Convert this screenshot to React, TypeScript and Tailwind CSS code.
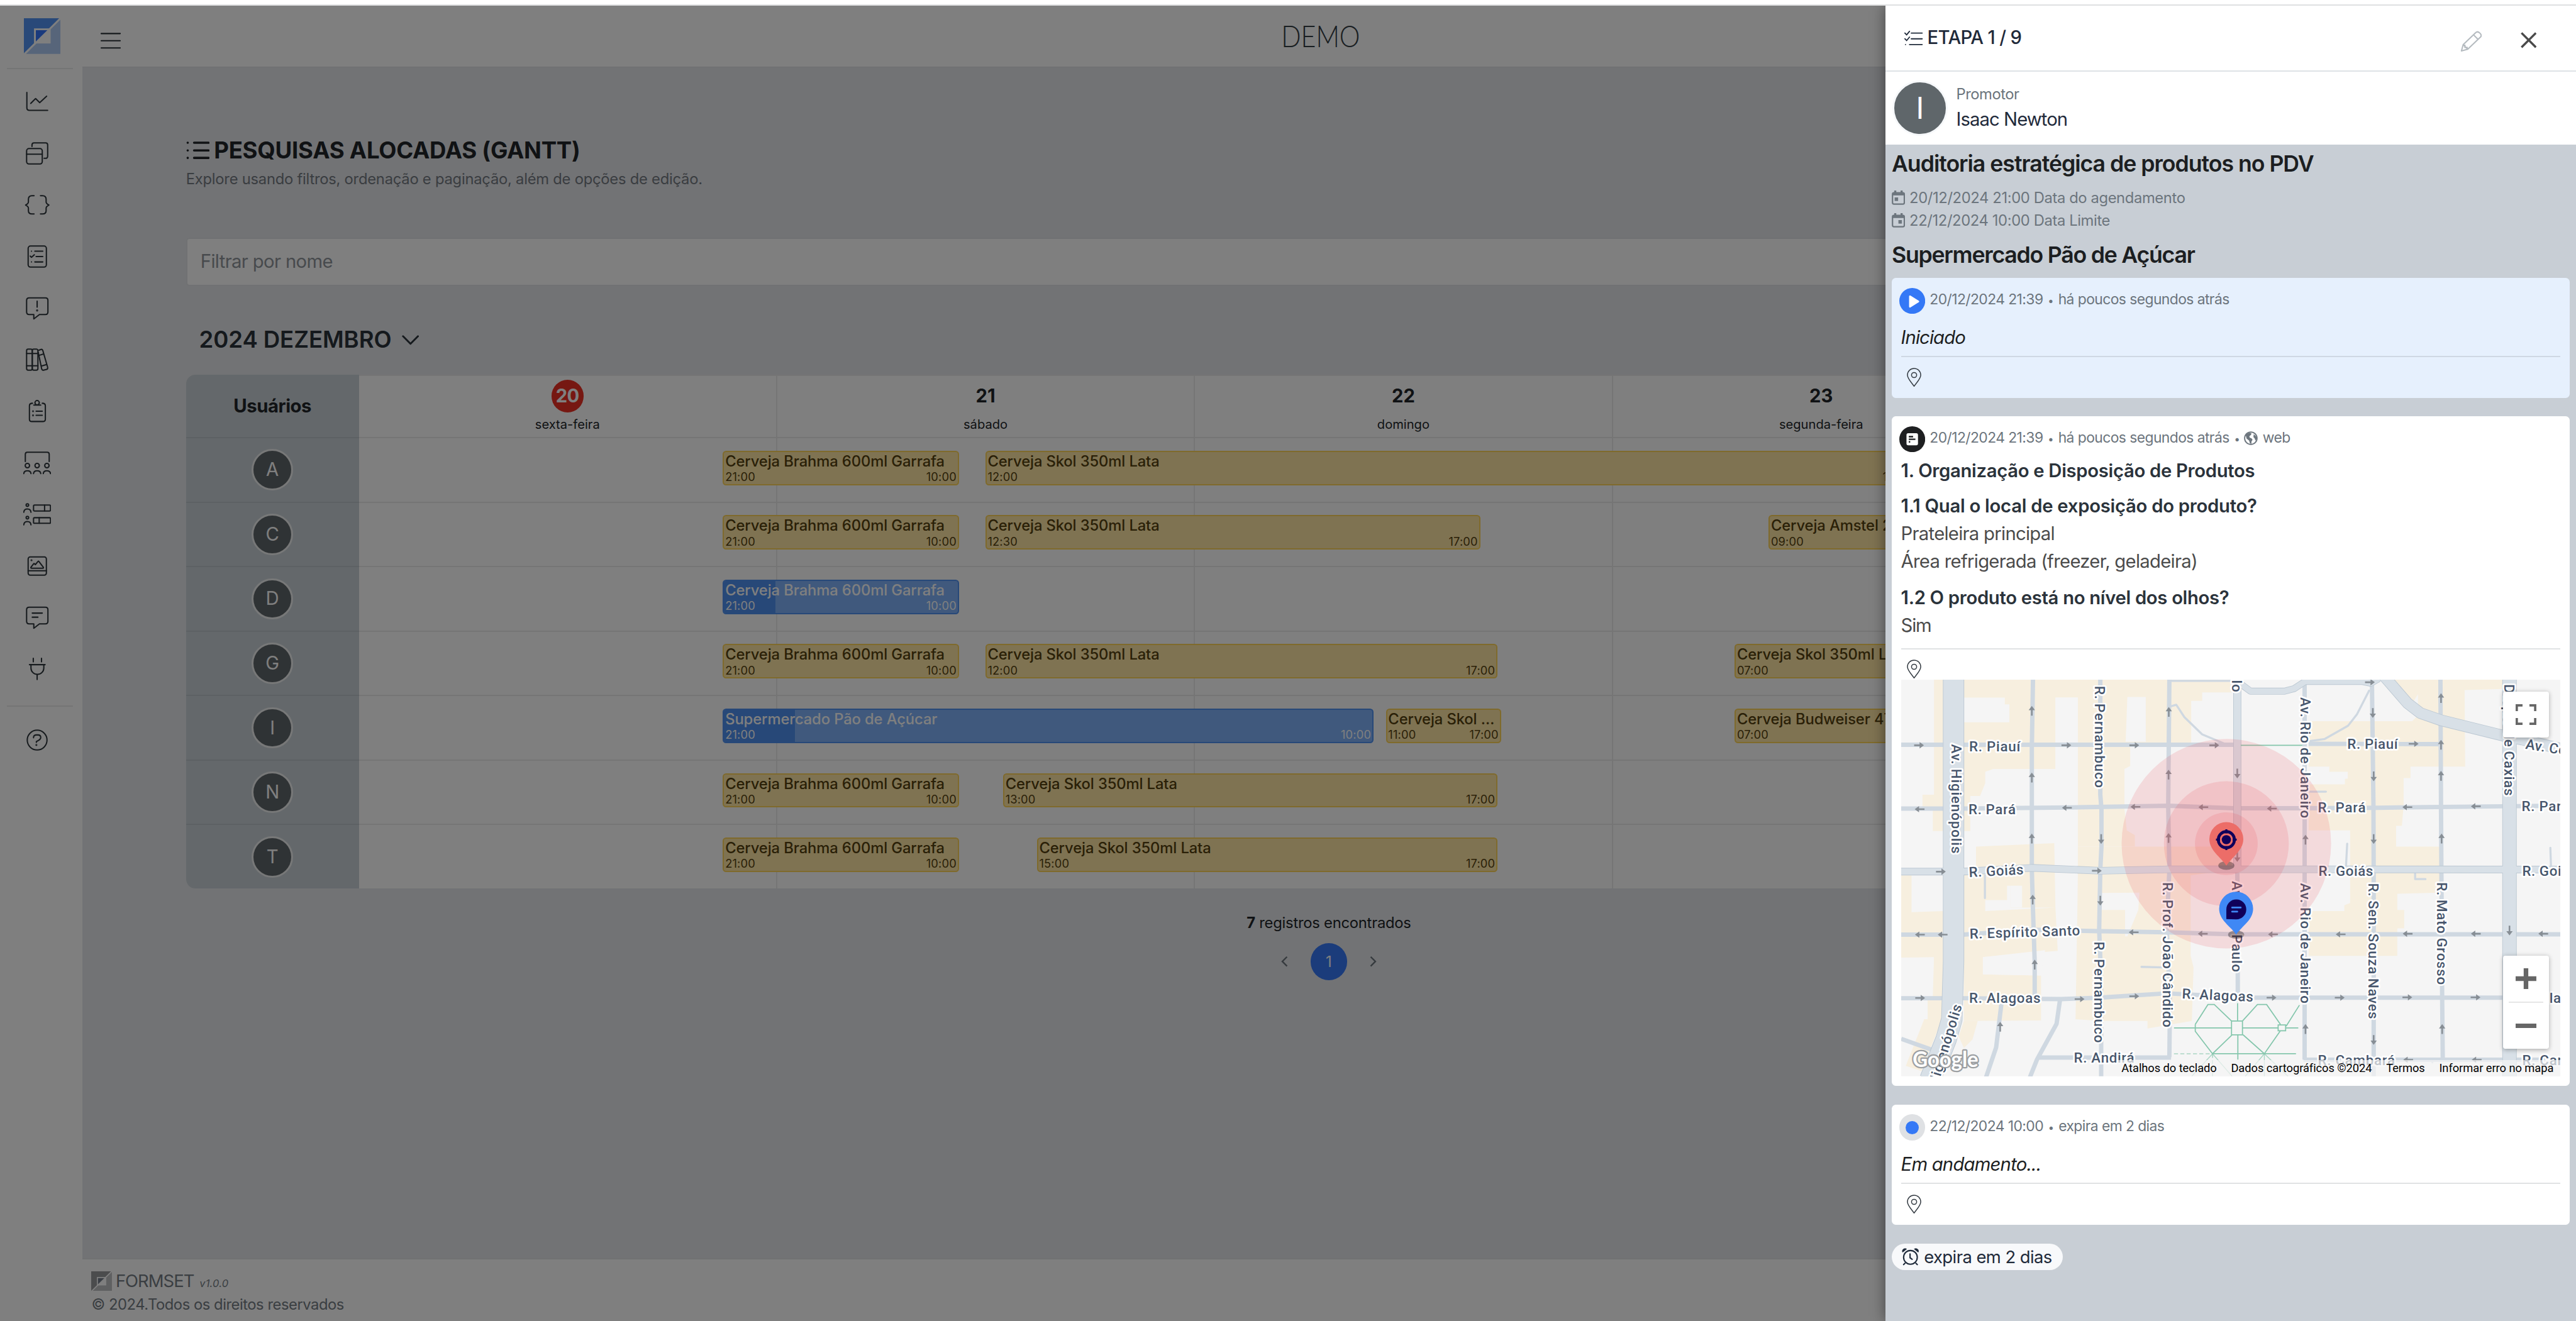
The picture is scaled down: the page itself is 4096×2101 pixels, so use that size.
import type { ReactNode } from "react";

/* ---------- icons ---------- */

function NavIcon({ children }: { children: ReactNode }) {
  return (
    <svg
      viewBox="-54 -54 108 108"
      className="h-[24.1px] w-[24.1px] fill-none stroke-[#2f373d]"
      strokeWidth="5"
      strokeLinecap="round"
      strokeLinejoin="round"
    >
      {children}
    </svg>
  );
}

const bubble =
  "M-31-40H32Q42-40 42-30V15Q42 25 32 25H9L-13 42V25H-31Q-41 25-41 15V-30Q-41-40-31-40Z";

const navIcons: ReactNode[] = [
  <path d="M-40-37V23Q-40 33-30 33H41M-25 6L-6-13L10 3L37-22" />,
  <g>
    <rect x="-41" y="-19" width="61" height="60" rx="9" />
    <path d="M-41 3H20M-20-27V-33Q-20-41-12-41H33Q41-41 41-33V10Q41 19 32 19H27" />
  </g>,
  <path d="M-12-36H-20Q-34-36-34-22V-12Q-34-6-45 0Q-34 6-34 12V22Q-34 35-20 35H-12M13-36H21Q35-36 35-22V-12Q35-6 46 0Q35 6 35 12V22Q35 35 21 35H13" />,
  <g>
    <rect x="-35" y="-41" width="71" height="82" rx="9" />
    <path d="M-9-21H22M-4 0H22M-9 21H22M-27-2L-22 3L-11-7M-22-21h.1M-22 21h.1" />
  </g>,
  <g>
    <path d={bubble} />
    <path d="M0-27V-4" />
    <circle cx="0" cy="9" r="1.6" />
  </g>,
  <g>
    <rect x="-41" y="-41" width="22" height="82" rx="6" />
    <rect x="-19" y="-41" width="22" height="82" rx="6" />
    <path d="M-41-24H3M-41 24H3M7-37L15-40Q20-41 22-36L41 30Q42 36 37 38L25 41Q20 42 18 37L4-30M8-17L25-22M16 25L37 19" />
  </g>,
  <g>
    <path d="M-18-31Q-30-31-30-21V31Q-30 40-21 40H22Q32 40 32 31V-21Q32-31 20-31M-13-24H14M-4 0H20M-4 16H20" />
    <circle cx="0" cy="-33" r="8.5" />
    <circle cx="-16" cy="0" r="1.3" />
    <circle cx="-16" cy="16" r="1.3" />
  </g>,
  <g>
    <path d="M-46-5V-33Q-46-41-38-41H39Q47-41 47-33V-5" />
    <circle cx="-38" cy="11" r="8.5" />
    <circle cx="0" cy="11" r="8.5" />
    <circle cx="38" cy="11" r="8.5" />
    <path d="M-52 42Q-51 31-38 31Q-25 31-24 42M-14 42Q-13 31 0 31Q13 31 14 42M24 42Q25 31 38 31Q51 31 52 42" />
  </g>,
  <g>
    <circle cx="-38" cy="-36" r="5" />
    <circle cx="-38" cy="13" r="5" />
    <path d="M-52-8Q-51-21-38-21Q-25-21-24-8M-52 41Q-51 28-38 28Q-25 28-24 41M29-36V-13M8 13V35" />
    <rect x="-14" y="-36" width="66" height="23" rx="4" />
    <rect x="-14" y="13" width="66" height="22" rx="4" />
  </g>,
  <g>
    <rect x="-35" y="-35" width="71" height="71" rx="8" />
    <path d="M-35 19H36M-24 5L-14-8Q-12-11-9-7L-7-5L3-17Q5-20 8-16L24 5Q26 9 22 9H-21Q-26 9-24 5Z" />
    <circle cx="-22" cy="-22" r="1.3" />
  </g>,
  <g>
    <path d={bubble} />
    <path d="M-19-17H20M-19-1H3" />
  </g>,
  <path d="M-15-42V-28M17-42V-28M-30-17H31M-24-17V-4A25 25 0 0 0 26-4V-17M0 22V41" />,
];

function Logo({ dark, light, core, className }: { dark: string; light: string; core: string; className: string }) {
  return (
    <svg viewBox="0 0 142 137" preserveAspectRatio="none" className={className}>
      <path d="M0 0H136L0 136Z" fill={dark} />
      <path d="M142 4V137H8Z" fill={light} />
      <path d="M39 39H103V97H39Z" fill="#fff" />
      <path d="M46 46H95L46 94Z" fill={core} />
      <path d="M140 1L2 136" stroke="#fff" strokeWidth="5" />
    </svg>
  );
}

function PinIcon() {
  return (
    <svg viewBox="0 0 76 100" className="ml-[5px] h-[16.5px] w-[12.6px] fill-none stroke-[#343b42]" strokeWidth="5" strokeLinejoin="round">
      <path d="M38 97C30 84 3 58 3 38A35 35 0 0 1 73 38C73 58 46 84 38 97Z" />
      <circle cx="38" cy="38" r="13.5" />
    </svg>
  );
}

function CalendarIcon({ right }: { right?: boolean }) {
  return (
    <svg viewBox="0 0 23 25" className="h-[12.6px] w-[11.6px] fill-none stroke-[#6c757d]" strokeWidth="2.4">
      <rect x="1.3" y="4" width="20.4" height="19.5" rx="2.5" />
      <path d="M1.3 6.5H21.7M6 0V5M17 0V5" strokeWidth="3.6" />
      <rect x={right ? 12 : 5.5} y="12.5" width="5" height="5" className="fill-[#6c757d]" strokeWidth="1" />
    </svg>
  );
}

/* ---------- gantt data ---------- */

type Bar = { x: number; end: number; title: string; from: string; to: string; split?: number };

const brahma: Bar = { x: 628, end: 833.1, title: "Cerveja Brahma 600ml Garrafa", from: "21:00", to: "10:00" };

const rows: { user: string; bars: Bar[] }[] = [
  { user: "A", bars: [brahma, { x: 856, end: 1663, title: "Cerveja Skol 350ml Lata", from: "12:00", to: "17:00" }] },
  {
    user: "C",
    bars: [
      brahma,
      { x: 856, end: 1286, title: "Cerveja Skol 350ml Lata", from: "12:30", to: "17:00" },
      { x: 1536.5, end: 1760, title: "Cerveja Amstel 269ml Lata", from: "09:00", to: "17:00" },
    ],
  },
  { user: "D", bars: [{ ...brahma, split: 673.5 }] },
  {
    user: "G",
    bars: [
      brahma,
      { x: 856, end: 1301, title: "Cerveja Skol 350ml Lata", from: "12:00", to: "17:00" },
      { x: 1507, end: 1760, title: "Cerveja Skol 350ml Lata", from: "07:00", to: "17:00" },
    ],
  },
  {
    user: "I",
    bars: [
      { x: 628, end: 1193.3, title: "Supermercado Pão de Açúcar", from: "21:00", to: "10:00", split: 690.8 },
      { x: 1204, end: 1304, title: "Cerveja Skol 350ml Lata", from: "11:00", to: "17:00" },
      { x: 1507, end: 1760, title: "Cerveja Budweiser 473ml", from: "07:00", to: "17:00" },
    ],
  },
  { user: "N", bars: [brahma, { x: 871.4, end: 1301, title: "Cerveja Skol 350ml Lata", from: "13:00", to: "17:00" }] },
  { user: "T", bars: [brahma, { x: 900.8, end: 1301, title: "Cerveja Skol 350ml Lata", from: "15:00", to: "17:00" }] },
];

const days = [
  { n: "20", name: "sexta-feira", today: true },
  { n: "21", name: "sábado" },
  { n: "22", name: "domingo" },
  { n: "23", name: "segunda-feira" },
  { n: "24", name: "terça-feira" },
];

const gridLeft = 311.8;

function GanttBar({ bar }: { bar: Bar }) {
  const blue = bar.split !== undefined;
  return (
    <div
      className={
        "absolute top-[10.7px] h-[30px] overflow-hidden rounded-[3px] border-[1.1px] " +
        (blue ? "border-[#4e90f0] bg-[#80b2fa] text-white" : "border-[#fed458] bg-[#ffe6a4] text-[#54410f]")
      }
      style={{ left: bar.x - gridLeft, width: bar.end - bar.x }}
    >
      {blue && <div className="absolute inset-y-0 left-0 bg-[#4e90f0]" style={{ width: bar.split! - bar.x - 1 }} />}
      <div className="relative px-[1px]">
        <div className="truncate text-[13px] leading-[16px] font-medium tracking-[-0.005em]">{bar.title}</div>
        <div className="flex justify-between text-[10px] leading-[12px] tracking-[0.008em]">
          <span>{bar.from}</span>
          <span>{bar.to}</span>
        </div>
      </div>
    </div>
  );
}

/* ---------- map ---------- */

type Label = { t: string; x: number; y: number; len: number; rot?: number; end?: boolean };

const labels: Label[] = [
  { t: "R. Piauí", x: 118, y: 124, len: 89 },
  { t: "R. Pará", x: 117, y: 233.5, len: 82 },
  { t: "R. Goiás", x: 118, y: 343, len: 95, rot: -3 },
  { t: "R. Espírito Santo", x: 119, y: 450, len: 192, rot: -1.8 },
  { t: "R. Alagoas", x: 118, y: 562, len: 124 },
  { t: "R. Andirá", x: 300, y: 665.6, len: 105 },
  { t: "R. Alagoas", x: 487.6, y: 554, len: 124, rot: 2.5 },
  { t: "R. Piauí", x: 775, y: 120, len: 88 },
  { t: "R. Pará", x: 724, y: 231, len: 83 },
  { t: "R. Goiás", x: 725, y: 340.5, len: 95 },
  { t: "R. Cambará", x: 724, y: 670, len: 134 },
  { t: "R. Pará", x: 1078, y: 228.5, len: 83 },
  { t: "R. Goiás", x: 1079, y: 340.5, len: 95 },
  { t: "R. Alagoas", x: 1079, y: 561, len: 124 },
  { t: "R. Cambará", x: 1079, y: 670, len: 134 },
  { t: "Av. Celso Garcia Cid", x: 1084, y: 120, len: 230, rot: 9 },
  { t: "Av. Higienópolis", x: 87, y: 112, len: 190, rot: 90 },
  { t: "Av. Higienópolis", x: 106, y: 567, len: 190, rot: -73, end: true },
  { t: "R. Pernambuco", x: 337, y: 11, len: 177, rot: 90 },
  { t: "R. Pernambuco", x: 336, y: 455, len: 176, rot: 90 },
  { t: "R. Prof. João Cândido", x: 454.7, y: 352, len: 252, rot: 90 },
  { t: "Av. São Paulo", x: 575, y: 21.5, len: 158, rot: 90, end: true },
  { t: "Av. São Paulo", x: 575, y: 350, len: 158, rot: 90 },
  { t: "Av. Rio de Janeiro", x: 694, y: 30.6, len: 210, rot: 90 },
  { t: "Av. Rio de Janeiro", x: 694, y: 353.5, len: 209, rot: 90 },
  { t: "R. Sen. Souza Naves", x: 812, y: 353.5, len: 236, rot: 90 },
  { t: "R. Mato Grosso", x: 931, y: 352, len: 178, rot: 90 },
  { t: "Duque de Caxias", x: 1048, y: 8, len: 193.5, rot: 90 },
];

const arrows: Record<"r" | "l" | "u" | "d", [number, number][]> = {
  r: [[31, 114], [287, 114], [405, 114], [544, 114], [69, 333.6], [340, 332], [33, 553], [310, 555], [405, 550], [890.5, 111.5], [814.5, 4.5], [643.5, 552.6], [762, 552.6], [879.5, 552], [998, 552]],
  l: [[32, 225], [288, 222.5], [407, 221], [525, 221.6], [32.5, 443], [72, 443], [404, 439], [524, 441.5], [644, 224], [879.5, 221.6], [998.5, 220], [646, 442.5], [763.6, 442.5], [880, 441.5], [998.5, 441.5], [1115.6, 441.5], [881, 660.5], [1000, 660.5]],
  u: [[227, 54], [227, 170], [227, 276], [228.5, 382], [232, 495], [172, 603], [465, 56], [464.6, 165], [464.6, 275], [938, 32], [938, 113], [938, 167], [939, 276], [940, 607], [702.5, 278], [702.5, 607]],
  d: [[347.5, 277], [346, 384], [584, 163], [584, 308], [819.5, 58], [821, 168], [821, 277], [821, 626], [1057, 436]],
};

const arrowAngle = { r: 0, l: 180, u: -90, d: 90 };

const blocks = [
  "57,0 348,0 348,31 268,31 268,155 160,155 146,160 146,180 137,202 120,202 120,263 55,263 55,223 37,223 37,200 57,200",
  "307,0 462,0 462,110 398,110 398,150 388,155 388,225 392,262 406,270 406,290 307,290 307,277 293,277 293,249 307,249",
  "425,0 575,0 575,22 523,22 523,37 504,37 504,110 425,110",
  "130,290 266,284 268,396 190,396 190,358 184,358 184,383 146,383 146,402 268,396 272,471 142,482 142,512 243,514 243,592 109,593 109,338 130,338",
  "0,340 18,340 18,404 73,402 73,593 70,593 45,655 35,680 8,671 40,590 46,590 46,551 55,550 57,482 0,483",
  "109,593 133,593 124,625 109,640 100,620",
  "307,345 347,340 347,400 389,400 389,450 349,450 349,593 303,590",
  "307,290 574,290 574,330 503,340 503,480 508,500 505,593 428,606 428,593 349,593 349,446 393,446 412,400 414,370 307,371",
  "840,0 1045,0 1045,16 979,18 980,151 885,151 885,171 873,171 873,218 870,254 860,254 860,290 936,290 936,370 862,372 862,400 874,400 874,432 862,432 862,480 708,480 708,402 770,402 770,392 780,388 780,262 708,262 708,72 888,72 898,62 865,25 845,10",
];

const whites = [
  "109,31 180,31 180,43 188,43 188,74 109,74",
  "268,31 307,31 307,290 268,284",
  "393,30 425,30 425,108 390,108",
  "708,151 744,151 744,160 776,160 776,172 771,172 771,182 708,182",
  "190,358 210,358 210,396 190,396",
  "142,482 250,470 243,514 142,512",
  "889,40 898,25 898,50",
];

const minorRoads = [
  "M229 0L227 120V330L229 400L232 490V550",
  "M346 0V200L348 225V290L346 330L344 435L347.5 520V689",
  "M466 0L464 220L466 330L461.5 430L467 560L466 656",
  "M584 320L585 560",
  "M701 5V660",
  "M818 6L820.6 217L821 330V689",
  "M937 0L938 220L940 552L941 657",
  "M0 113H578M708 111.5L934 112",
  "M0 224H109L290 222L465 219L578 223.5H701L830 222.5L1045 220L1146 219",
  "M0 443H108L228 434.5L344 437L461 439L577 442.5H1146",
  "M0 553.5H108L278 555L344 552.6L461 545L520 548L611 552.6H1146",
  "M240 656.5H469",
  "M699 660.5H1146",
  "M174.5 560L165 639L146 695M276 556L270 598L236 660L222 695M0 624L56 644",
];

const lanes = [
  "M466 47L478 43.5L492 65L523 95L561 111L578 112",
  "M468 2H575",
  "M813 19L792 60L776.5 80L736 103L708 107",
  "M710 194.5H738M775 285L773 322M893 336V346.5H911M1128 292L1129 322M145.5 340V379.5M417.5 499L456 500M923 660V665",
];

const avenues: { d: string; w: number }[] = [
  { d: "M91 -5V490L88 590L78 625L50 695", w: 35 },
  { d: "M584 0V330", w: 12 },
  { d: "M0 333.5H107L227 327L346 332L466 329.5H700L1146 330", w: 11 },
  { d: "M577 0L592 9L607 20H666L683 15.5L702 3H801L816 6L830 -2", w: 10 },
  { d: "M834 -12L880 41L902 58L938 70.5L1045 97L1079 104L1150 121", w: 18 },
  { d: "M1057 -5V700", w: 23 },
];

function CityMap() {
  return (
    <svg viewBox="0 0 1146 689" preserveAspectRatio="none" className="block h-full w-full" fontFamily="Roboto, sans-serif">
      <rect width="1146" height="689" fill="#f5f5f5" />
      {blocks.map((p) => (
        <polygon key={p} points={p} fill="#f7efdf" />
      ))}
      {whites.map((p) => (
        <polygon key={p} points={p} fill="#f5f5f5" />
      ))}
      <g fill="none" stroke="#cfd8e1" strokeLinejoin="round">
        {lanes.map((d) => (
          <path key={d} d={d} strokeWidth="3.6" strokeLinecap="round" />
        ))}
        {minorRoads.map((d) => (
          <path key={d} d={d} strokeWidth="7.6" />
        ))}
      </g>
      <g fill="none" strokeLinejoin="round">
        {avenues.map((a) => (
          <path key={a.d} d={a.d} stroke="#bcc8d3" strokeWidth={a.w + 2} />
        ))}
        {avenues.map((a) => (
          <path key={a.d} d={a.d} stroke="#d8e0e7" strokeWidth={a.w} />
        ))}
      </g>
      <g fill="none" stroke="#84c6ac" strokeWidth="1.9">
        <path d="M590 114H697" />
        <path d="M511 599L533 564.5H544L574 593M511 599V611L541 650L575 617M574 593H593V617H574ZM593 593L619 564.5H635L659 599M655 600H668V610H655ZM669 602L692 565.5M659 610L631 650L594 617M474 605H574M593 605H655M668 605H690M541 650H686M584.5 562V593M585 617V660" />
        <path d="M474 650H541M541 650V689" strokeDasharray="7 4" strokeWidth="1.2" />
        <path d="M541 650L505 689M541 650L575 689M631 650L598 689M631 650L672 689M631 650V689" opacity="0.7" strokeWidth="1.5" />
      </g>
      {(["r", "l", "u", "d"] as const).map((k) =>
        arrows[k].map(([x, y]) => (
          <g key={k + x + "-" + y} transform={`translate(${x} ${y}) rotate(${arrowAngle[k]})`}>
            <path d="M-8.5 -1.4H1V-5.5L8.5 0L1 5.5V1.4H-8.5Z" fill="#878e95" />
          </g>
        ))
      )}
      {labels.map((l) => (
        <text
          key={l.t + l.x + "-" + l.y}
          transform={`translate(${l.x} ${l.y}) rotate(${l.rot ?? 0})`}
          textLength={l.len}
          lengthAdjust="spacing"
          textAnchor={l.end ? "end" : "start"}
          fontSize="24.5"
          fontWeight="500"
          fill="#47566c"
          stroke="#fff"
          strokeWidth="6"
          strokeLinejoin="round"
          paintOrder="stroke"
        >
          {l.t}
        </text>
      ))}
      <g fill="#eb4650" fillOpacity="0.15">
        <circle cx="565" cy="285" r="182" />
        <circle cx="565" cy="285" r="108.5" />
        <circle cx="565" cy="285" r="54.5" />
      </g>
      <g>
        <ellipse cx="565" cy="323" rx="14" ry="7.5" fill="#000" fillOpacity="0.32" />
        <path d="M565 323C555 308 535.5 297 535.5 277A29.5 29.5 0 0 1 594.5 277C594.5 297 575 308 565 323Z" fill="#ec6d68" />
        <g fill="none" stroke="#10005a" strokeWidth="5">
          <circle cx="565" cy="278" r="14" />
          <path d="M565 260V267M565 289V296M547 278H554M576 278H583" strokeWidth="3.5" />
        </g>
        <circle cx="565" cy="278" r="8" fill="#10005a" />
        <ellipse cx="582" cy="443" rx="14" ry="7.5" fill="#000" fillOpacity="0.32" />
        <path d="M582 443C572 428 552.5 418 552.5 398A29.5 29.5 0 0 1 611.5 398C611.5 418 592 428 582 443Z" fill="#3f88f5" />
        <path d="M565 416V399A17.3 17.3 0 1 1 582 416.5Z" fill="#10005a" />
        <path d="M575 396H590M575 403H584" stroke="#3f88f5" strokeWidth="3" strokeLinecap="round" />
      </g>
      <text x="20" y="673" fontFamily="Lato, sans-serif" fontWeight="700" fontSize="37" textLength="114" lengthAdjust="spacingAndGlyphs" fill="#fff" stroke="#9c9fa2" strokeWidth="5" strokeLinejoin="round" paintOrder="stroke">
        Google
      </text>
    </svg>
  );
}

/* ---------- drawer pieces ---------- */

const metaText = "mt-[-2.4px] text-[12.5px] leading-[20px] tracking-[-0.025em] whitespace-nowrap text-[#6c757d]";

function Dot() {
  return <span className="mx-[0.9px] inline-block w-[5px] text-center text-[9px] leading-none">•</span>;
}

function Rule({ className }: { className: string }) {
  return <div className={"h-[1.1px] " + className} />;
}

function Drawer() {
  return (
    <aside className="absolute top-0 right-0 h-full w-[600px] bg-[#c8ced5] text-[#1c1e21] shadow-[0_0_12px_rgba(0,0,0,0.45)]">
      <header className="flex h-[56px] items-center bg-white pl-[16.6px]">
        <svg viewBox="0 0 32 28" className="h-[14px] w-[16px] fill-none stroke-[#1f2a3a]" strokeWidth="2" strokeLinecap="round">
          <path d="M12 5H31M12 15H31M9 25H31M1 5L4 8L9 2M1 15L4 18L9 12M2 25h.1" />
        </svg>
        <h2 className="ml-[3.8px] text-[16px] font-medium tracking-[-0.0226em] text-[#1f2a3a]">ETAPA 1 / 9</h2>
        <svg viewBox="0 0 38 37" className="mt-[6px] ml-[381px] h-[18.5px] w-[19px] fill-none stroke-[#b4babf]" strokeWidth="2.2" strokeLinejoin="round">
          <path d="M2 35L5 24L27 3Q30 0 34 4Q38 8 35 11L13 32ZM23 7L31 15M5 24L13 32M8 24V29H13" />
        </svg>
        <svg viewBox="0 0 28 28" className="mt-[4px] ml-[33.5px] h-[14px] w-[14px] fill-none stroke-[#4a4a4a]" strokeWidth="3.8">
          <path d="M1.5 1.5L26.5 26.5M26.5 1.5L1.5 26.5" />
        </svg>
      </header>
      <Rule className="bg-[#dee2e6]" />
      <div className="flex h-[63.8px] items-center bg-white pl-[6px]">
        <div className="flex h-[48px] w-[48px] items-center justify-center rounded-full border-2 border-[#f6f8fa] bg-[#5f666a] text-[26px] text-white">I</div>
        <div className="mt-[-1px] ml-[7.6px]">
          <div className="text-[13px] leading-[20px] tracking-[-0.021em] text-[#6c757d]">Promotor</div>
          <div className="mt-[0.4px] text-[16px] leading-[22px] tracking-[-0.032em] text-[#1f2a3a]">Isaac Newton</div>
        </div>
      </div>

      <div className="px-[5.5px] pt-[2.3px]">
        <h3 className="text-[19.5px] leading-[28px] font-semibold tracking-[-0.029em]">Auditoria estratégica de produtos no PDV</h3>
        <div className="mt-[6.2px] text-[13px] leading-[19.4px] tracking-[-0.0165em] text-[#6c757d]">
          <div className="flex items-center gap-[3.8px]">
            <CalendarIcon />
            20/12/2024 21:00 Data do agendamento
          </div>
          <div className="flex items-center gap-[3.8px]">
            <CalendarIcon right />
            22/12/2024 10:00 Data Limite
          </div>
        </div>
        <h3 className="mt-[6.5px] text-[19.5px] leading-[28px] font-semibold tracking-[-0.035em]">Supermercado Pão de Açúcar</h3>

        <section className="mt-[5.8px] h-[104.5px] rounded-[3.5px] bg-[#e6f0fd] px-[8px] pt-[8.6px]">
          <div className="ml-[-1.5px] flex items-center gap-[4px]">
            <svg viewBox="0 0 45 45" className="h-[22.5px] w-[22.5px]">
              <circle cx="22.5" cy="22.5" r="22.5" fill="#3478f6" />
              <path d="M18.5 14.5L33 23.5L18.5 32.5Z" fill="#fff" stroke="#fff" strokeWidth="3" strokeLinejoin="round" />
            </svg>
            <span className={metaText}>
              20/12/2024 21:39 <Dot /> há poucos segundos atrás
            </span>
          </div>
          <p className="mt-[8.9px] text-[16px] leading-[24px] tracking-[-0.0314em] italic">Iniciado</p>
          <Rule className="mt-[4px] bg-[#cfd8e4]" />
          <div className="mt-[8.9px]">
            <PinIcon />
          </div>
        </section>

        <section className="mt-[16px] h-[581.6px] rounded-[3.5px] bg-white px-[8px] pt-[8.6px]">
          <div className="ml-[-1.5px] flex items-center gap-[4px]">
            <svg viewBox="0 0 45 45" className="h-[22.5px] w-[22.5px]">
              <circle cx="22.5" cy="22.5" r="22.5" fill="#1e1f21" />
              <rect x="12.5" y="12" width="20" height="21" rx="3" fill="#fff" />
              <path d="M16.5 18H24M16.5 22.5H28M16.5 27H19" stroke="#1e1f21" strokeWidth="2.6" />
            </svg>
            <span className={metaText}>
              20/12/2024 21:39 <Dot /> há poucos segundos atrás <Dot />
            </span>
            <svg viewBox="0 0 24 24" className="mt-[-2.4px] ml-[-1px] h-[12px] w-[12px]">
              <circle cx="12" cy="12" r="10.8" fill="none" stroke="#6c757d" strokeWidth="2" />
              <path d="M3 6L9 2.5L13 3L12.5 6L9.5 8.5L10 11L13 12L15 14.5L13 18V22L10.5 21L9 16L4.5 12.5ZM17 5L22 9.5L22.5 13L20 16L18.5 12L16.5 10Z" fill="#6c757d" />
            </svg>
            <span className={metaText}>web</span>
          </div>
          <div className="mt-[4.1px] text-[16px] leading-[24px] text-[#4b4b4b]">
            <p className="font-semibold tracking-[-0.0105em] text-[#2b333b]">1. Organização e Disposição de Produtos</p>
            <p className="mt-[6.8px] font-semibold tracking-[-0.009em] text-[#2b333b]">1.1 Qual o local de exposição do produto?</p>
            <p className="tracking-[-0.0245em]">Prateleira principal</p>
            <p className="tracking-[-0.0245em]">Área refrigerada (freezer, geladeira)</p>
            <p className="mt-[7.5px] font-semibold tracking-[-0.011em] text-[#2b333b]">1.2 O produto está no nível dos olhos?</p>
            <p className="tracking-[-0.04em]">Sim</p>
          </div>
          <Rule className="mt-[7.8px] bg-[#e0e2e4]" />
          <div className="mt-[9px]">
            <PinIcon />
          </div>
          <div className="relative mt-[1px] h-[344.6px] overflow-hidden">
            <CityMap />
            <div className="absolute top-[10px] right-[10px] flex h-[40px] w-[40px] items-center justify-center rounded-[2px] bg-white shadow-[0_1px_4px_rgba(0,0,0,0.3)]">
              <svg viewBox="0 0 18 18" className="h-[18px] w-[18px] fill-none stroke-[#666]" strokeWidth="2">
                <path d="M1 6V1H6M12 1H17V6M17 12V17H12M6 17H1V12" />
              </svg>
            </div>
            <div className="absolute right-[10px] bottom-[24px] flex h-[81px] w-[40px] flex-col items-center rounded-[2px] bg-white shadow-[0_1px_4px_rgba(0,0,0,0.3)]">
              <svg viewBox="0 0 18 18" className="mt-[11px] h-[18px] w-[18px] fill-none stroke-[#666]" strokeWidth="4">
                <path d="M0 9H18M9 0V18" />
              </svg>
              <div className="mt-[11px] h-[1.1px] w-[30px] bg-[#e6e6e6]" />
              <div className="mt-[17.8px] h-[4px] w-[18px] bg-[#666]" />
            </div>
            <div className="absolute right-0 bottom-0 flex h-[14px] items-center gap-[12.4px] bg-[#f5f5f5]/70 pr-[6px] pl-[4px] font-[Roboto,sans-serif] text-[10px] tracking-[-0.003em] whitespace-nowrap text-black">
              <span>Atalhos do teclado</span>
              <span>Dados cartográficos ©2024</span>
              <span>Termos</span>
              <span>Informar erro no mapa</span>
            </div>
          </div>
        </section>

        <section className="mt-[16.2px] h-[104.5px] rounded-[3.5px] bg-white px-[8px] pt-[8.7px]">
          <div className="ml-[-1.5px] flex items-center gap-[4px]">
            <span className="flex h-[22.5px] w-[22.5px] items-center justify-center rounded-full bg-[#dfe1e4]">
              <span className="h-[11.5px] w-[11.5px] rounded-full bg-[#3478f6]" />
            </span>
            <span className={metaText}>
              22/12/2024 10:00 <Dot /> expira em 2 dias
            </span>
          </div>
          <p className="mt-[9px] text-[16px] leading-[24px] tracking-[-0.0269em] italic">Em andamento...</p>
          <Rule className="mt-[3.8px] bg-[#e0e2e4]" />
          <div className="mt-[9.2px]">
            <PinIcon />
          </div>
        </section>

        <div className="mt-[16.4px] flex h-[22.8px] w-[148.5px] items-center rounded-full bg-[#f8f9fb] pl-[9px]">
          <svg viewBox="0 0 90 92" className="mr-[4px] h-[15.2px] w-[15px] fill-none stroke-[#1f2a3a]" strokeWidth="7" strokeLinecap="round">
            <circle cx="45" cy="49" r="36" />
            <path d="M43 31V51L54 59M16 80L9 87M74 80L81 87" />
            <path d="M2 20A15 15 0 0 1 26 5L5 22ZM88 20A15 15 0 0 0 64 5L85 22Z" className="fill-[#1f2a3a]" strokeWidth="1" />
          </svg>
          <span className="text-[15px] leading-[22px] tracking-[-0.021em] whitespace-nowrap text-[#1f2a3a]">expira em 2 dias</span>
        </div>
      </div>
    </aside>
  );
}

/* ---------- page ---------- */

export default function App() {
  return (
    <div className="flex h-[1148px] w-[2238px] flex-col overflow-hidden bg-white font-[Inter,'Liberation_Sans',sans-serif] text-[#212529] [zoom:1.8302]">
      <div className="h-[4px] shrink-0 bg-white" />
      <div className="h-[1px] shrink-0 bg-[#dfe0e1]" />
      <div className="relative flex h-[1143px] overflow-hidden">
        {/* sidebar */}
        <nav className="w-[71.5px] shrink-0 bg-white">
          <div className="h-[54px] pt-[11px] pl-[20.5px]">
            <Logo dark="#5292f2" light="#aecbf5" core="#3475fb" className="h-[31px] w-[32px]" />
          </div>
          <Rule className="ml-[6px] w-[57.4px] bg-[#e9eaeb]" />
          <div className="mt-[6px] pl-[20.4px]">
            {navIcons.map((icon, i) => (
              <div key={i} className="flex h-[44.8px] items-center">
                <NavIcon>{icon}</NavIcon>
              </div>
            ))}
          </div>
          <Rule className="mt-[9.4px] ml-[6px] w-[57.4px] bg-[#e9eaeb]" />
          <div className="mt-[6.5px] flex h-[44.8px] items-center pl-[20.4px]">
            <NavIcon>
              <circle cx="0" cy="0" r="38.5" />
              <path d="M-14-9V-11Q-13-20-3-20H3Q14-20 14-10Q14-4 6 1L-3 6V9" />
              <circle cx="-3" cy="19" r="1.4" />
            </NavIcon>
          </div>
        </nav>

        <div className="flex flex-1 flex-col">
          {/* top bar */}
          <header className="flex h-[53px] shrink-0 items-start bg-white pl-[16.2px]">
            <svg viewBox="0 0 35 28" className="mt-[23.5px] h-[14px] w-[17.5px] stroke-[#2b3238]" strokeWidth="2.2" strokeLinecap="round">
              <path d="M1 1.5H34M1 14H34M1 26.5H34" />
            </svg>
            <svg viewBox="0 0 80 34" className="mt-[10px] ml-[1003px] h-[34px] w-[80px]">
              <text x="5" y="26" fontFamily="Lato, sans-serif" fontWeight="300" fontSize="26.2" textLength="68.5" lengthAdjust="spacingAndGlyphs" fill="#333c43">
                DEMO
              </text>
            </svg>
          </header>

          {/* content */}
          <main className="h-[1035.5px] shrink-0 border-t border-[#dcdee2] bg-[#e5e7eb] pt-[57.2px] pl-[90.1px]">
            <div className="w-[1985.8px]">
              <div className="flex h-[30px] items-center">
                <svg viewBox="0 0 91 70" className="h-[15.6px] w-[20.3px] fill-none stroke-[#212529]" strokeWidth="9" strokeLinecap="round">
                  <path d="M31 5H87M31 35H87M31 64H87M6 5h.1M6 35h.1M6 64h.1" />
                </svg>
                <h1 className="ml-[4px] text-[20px] leading-[30px] font-bold tracking-[-0.007em]">PESQUISAS ALOCADAS (GANTT)</h1>
              </div>
              <p className="text-[13px] leading-[20px] tracking-[-0.0105em] text-[#747a82]">
                Explore usando filtros, ordenação e paginação, além de opções de edição.
              </p>
              <div className="mt-[40.6px] flex h-[42.3px] items-center rounded-[3px] border-[1.1px] border-[#e0e3e7] bg-white pl-[11.5px] text-[16px] tracking-[-0.022em] text-[#8f959b]">
                Filtrar por nome
              </div>
              <div className="mt-[31.9px] flex h-[30px] items-center pl-[11.4px] text-[#2b333a]">
                <h2 className="text-[20px] leading-[30px] font-semibold tracking-[-0.003em]">2024 DEZEMBRO</h2>
                <svg viewBox="0 0 30 18" className="ml-[9px] h-[9px] w-[15px] fill-none stroke-[#2b333a]" strokeWidth="3.2" strokeLinecap="round" strokeLinejoin="round">
                  <path d="M2 2L15 15L28 2" />
                </svg>
              </div>

              <div className="mt-[15.3px] flex h-[446.3px] overflow-hidden rounded-l-[8px]">
                <div className="w-[150.2px] shrink-0 bg-[#c9d1d6]">
                  <div className="flex h-[54px] items-center justify-center text-[16px] font-bold tracking-[-0.0162em]">Usuários</div>
                  {rows.map((r) => (
                    <div key={r.user} className="flex h-[56.03px] items-center justify-center border-t-[1.1px] border-[#bac3c8]">
                      <div className="flex h-[36px] w-[36px] items-center justify-center rounded-full border-2 border-[#eff0f1] bg-[#5f666a] text-[16px] text-white">
                        {r.user}
                      </div>
                    </div>
                  ))}
                </div>
                <div className="flex-1 overflow-hidden border-t-[1.1px] border-[#ebebeb] bg-white">
                  <div className="flex h-[53px]">
                    {days.map((d, i) => (
                      <div
                        key={d.n}
                        className={
                          "flex shrink-0 flex-col items-center pt-[3.3px] " +
                          (i === 0 ? "w-[362.4px]" : "w-[363px] border-l-[1.1px] border-[#ebebeb]")
                        }
                      >
                        <div
                          className={
                            "flex h-[28px] items-center justify-center rounded-full text-[16px] font-bold " +
                            (d.today ? "w-[28px] bg-[#ec3024] tracking-[-0.02em] text-white" : "")
                          }
                        >
                          {d.n}
                        </div>
                        <div className="mt-[2.6px] text-[11px] leading-[16px]">{d.name}</div>
                      </div>
                    ))}
                  </div>
                  {rows.map((r) => (
                    <div key={r.user} className="relative flex h-[56.03px] border-t-[1.1px] border-[#ebebeb]">
                      {days.map((d, i) => (
                        <div key={d.n} className={"shrink-0 " + (i === 0 ? "w-[362.4px]" : "w-[363px] border-l-[1.1px] border-[#ebebeb]")} />
                      ))}
                      {r.bars.map((b) => (
                        <GanttBar key={b.x} bar={b} />
                      ))}
                    </div>
                  ))}
                </div>
              </div>

              <p className="mt-[20px] text-center text-[13px] leading-[20px] tracking-[-0.0101em]">
                <b>7</b> registros encontrados
              </p>
              <div className="mt-[7.6px] flex items-center justify-center gap-[19px]">
                <svg viewBox="0 0 8 12" className="h-[10px] w-[6.5px] fill-none stroke-[#6c757d]" strokeWidth="1.6">
                  <path d="M7 1L2 6L7 11" />
                </svg>
                <span className="mx-[0.5px] flex h-[32px] w-[32px] items-center justify-center rounded-full bg-[#3678f6] text-[13px] text-white">1</span>
                <svg viewBox="0 0 8 12" className="h-[10px] w-[6.5px] fill-none stroke-[#6c757d]" strokeWidth="1.6">
                  <path d="M1 1L6 6L1 11" />
                </svg>
              </div>
            </div>
          </main>

          {/* footer */}
          <footer className="flex-1 border-t-[1.1px] border-[#e0e2e5] bg-white pt-[7.6px] pl-[8px] text-[#747c84]">
            <div className="flex h-[22px] items-start">
              <Logo dark="#97989a" light="#bfc0c2" core="#747c8a" className="mt-[2.5px] h-[17.3px] w-[18px]" />
              <span className="ml-[3px] text-[15px] leading-[22px] tracking-[-0.0358em]">FORMSET</span>
              <span className="mt-[2.2px] ml-[4.8px] text-[9px] leading-[22px] tracking-[0.0115em] italic">v1.0.0</span>
            </div>
            <p className="text-[13px] leading-[20px] tracking-[-0.0195em]">© 2024.Todos os direitos reservados</p>
          </footer>
        </div>

        <div className="absolute inset-0 bg-black/50" />
        <Drawer />
      </div>
    </div>
  );
}
